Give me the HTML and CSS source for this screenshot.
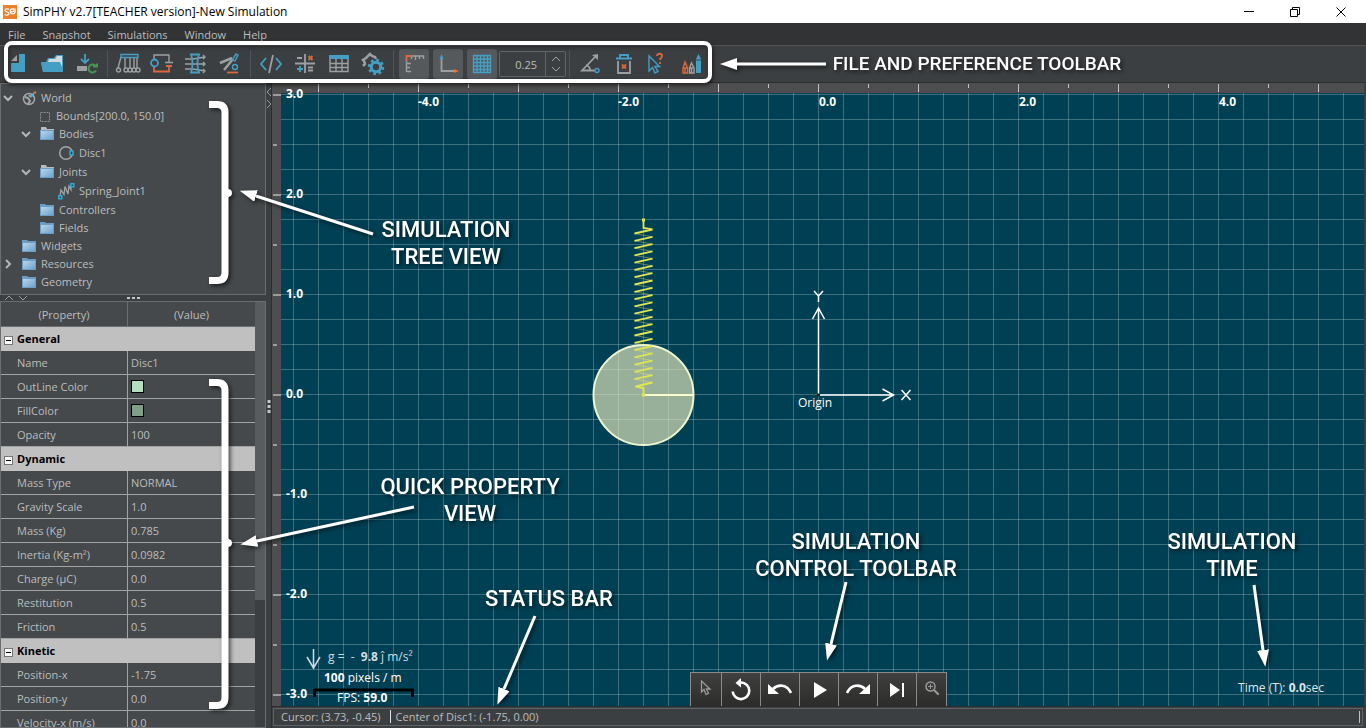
FILE: index.html
```html
<!DOCTYPE html>
<html lang="en">
<head>
<meta charset="utf-8">
<title>SimPHY v2.7[TEACHER version]-New Simulation</title>
<link rel="stylesheet" href="styles.css">
</head>
<body>
<div class="app">
  <header class="titlebar">
    <svg class="logo" viewBox="0 0 14 14" aria-hidden="true"><rect width="14" height="14" fill="#ee7f2b"/><path d="M6 4.500C5 3.500 2 3.500 2 5.300C2 7 6 6.500 6 8.600C6 10.500 2.500 10.500 1.700 9.300" fill="none" stroke="#fff" stroke-width="1.300"/><circle cx="9.700" cy="6.300" r="2.500" fill="none" stroke="#fff" stroke-width="1.200"/><path d="M8 8.500L12.500 3.500M8 6.500h3.500" stroke="#fff" stroke-width=".9"/></svg>
    <h1 class="title">SimPHY v2.7[TEACHER version]-New Simulation</h1>
    <div class="window-buttons">
      <button type="button" aria-label="Minimize"><svg width="12" height="12" viewBox="0 0 12 12"><path d="M1 5.500h10"/></svg></button>
      <button type="button" aria-label="Restore"><svg width="12" height="12" viewBox="0 0 12 12"><path d="M1.500 3.500h7v7h-7zM3.500 3.500v-2h7v7h-2"/></svg></button>
      <button type="button" aria-label="Close"><svg width="12" height="12" viewBox="0 0 12 12"><path d="M1.500 1.500l9 9M10.500 1.500l-9 9"/></svg></button>
    </div>
  </header>

  <nav class="menubar">
    <button type="button">File</button>
    <button type="button">Snapshot</button>
    <button type="button">Simulations</button>
    <button type="button">Window</button>
    <button type="button">Help</button>
  </nav>

  <div class="toolbar">
    <button class="tool" type="button" aria-label="New"><svg viewBox="0 0 24 24"><path d="M12 2h6v18H4v-9h8z" class="fb"/><path d="M10 3v6H4z" class="fg"/></svg></button>
    <button class="tool" type="button" aria-label="Open"><svg viewBox="0 0 24 24"><path d="M0 10h5l2-4h6l2-3h7v17H2z" class="fb"/><path d="M7 10l1-3h6l2-3h5v11l-2-5z" fill="#d3dadd"/><path d="M0 10h18l3 10H2z" class="fb"/></svg></button>
    <button class="tool" type="button" aria-label="Save"><svg viewBox="0 0 24 24"><path d="M10 2v9M6 7l4 4 4-4" class="sb w2"/><path d="M2 14h10v5H2z" class="fg"/><path d="M21 14.500a4 4 0 1 0 0 4M18 14.500h4v-3" fill="none" stroke="#469653" stroke-width="2"/></svg></button>
    <span class="sep"></span>
    <button class="tool" type="button" aria-label="Newton's cradle"><svg viewBox="0 0 24 24"><path d="M5 5L2 16M9 6v10M14 6v10M18 6v10M21 6v10" class="sg"/><circle cx="2.500" cy="18" r="2" class="sg"/><circle cx="10" cy="18" r="2" class="sg"/><circle cx="14" cy="18" r="2" class="sg"/><circle cx="18" cy="18" r="2" class="sg"/><circle cx="22" cy="18" r="2" class="sg"/><path d="M5 2.500h17v3H5z" class="sb" stroke-width="2"/></svg></button>
    <button class="tool" type="button" aria-label="Circuit"><svg viewBox="0 0 24 24"><path d="M4 8V3h15v7M15 10.500h8" class="sg"/><path d="M16 14h6M19 14v5.500H4V14" class="so w2"/><circle cx="4.500" cy="11" r="3.500" class="sb w2"/></svg></button>
    <button class="tool" type="button" aria-label="Lens"><svg viewBox="0 0 24 24"><path d="M1 7h8l12-2M1 12h20M1 17h8l12 2M19 3l2 2-2 2M19 10l2 2-2 2M19 17l2 2-2 2" class="sg"/><path d="M7 2.500h8c-2 5-2 13 0 18H7c2-5 2-13 0-18z" class="sb w2"/></svg></button>
    <button class="tool" type="button" aria-label="Incline"><svg viewBox="0 0 24 24"><path d="M2 11l12-5M6 18l9-11" class="sg thick"/><path d="M14 8l4-6 2 1-3 6z" class="sb"/><circle cx="17" cy="15" r="2.500" class="sb"/><path d="M9 20.500h11" class="so w2"/></svg></button>
    <span class="sep"></span>
    <button class="tool" type="button" aria-label="Script"><svg viewBox="0 0 24 24"><path d="M7 6l-5 6 5 6M17 6l5 6-5 6" class="sb w2"/><path d="M14 3l-4 18" class="sg w2"/></svg></button>
    <button class="tool" type="button" aria-label="Calculator"><svg viewBox="0 0 24 24"><path d="M2 11.500h20M12 2v19M4 6h5M15 15.500h5M15 18.500h5" class="sg w2"/><path d="M15.500 4l4 4M19.500 4l-4 4" class="so w2"/><path d="M4 17h6M7 14v6" class="sb w2"/></svg></button>
    <button class="tool" type="button" aria-label="Table"><svg viewBox="0 0 24 24"><path d="M3 7v12.500h18V7M3 11.500h18M3 15.500h18M9 7v12M15 7v12" class="sg"/><path d="M2 3h20v4H2z" class="fb"/></svg></button>
    <button class="tool" type="button" aria-label="Settings"><svg viewBox="0 0 24 24"><path d="M2 14l2-2-1-3-1-1 3-2 2-2 2-2 2 2 3 1 1 2" class="sg thick"/><circle cx="15" cy="15" r="4.700" fill="none" stroke="#459fc5" stroke-width="3"/><circle cx="15" cy="15" r="7" fill="none" stroke="#459fc5" stroke-width="2.500" stroke-dasharray="2.750 2.750"/></svg></button>
    <span class="sep"></span>
    <button class="tool toggle" type="button" aria-pressed="true" aria-label="Rulers"><svg viewBox="0 0 24 24"><path d="M4.500 20V7M5 11.500h4M5 15.500h3M5 19.500h4M7 4h15M9.500 4v3M13.500 4v4M17.500 4v3M21.500 4v3" class="sg"/><path d="M4.500 9V4H10" class="so w2"/></svg></button>
    <button class="tool toggle" type="button" aria-pressed="true" aria-label="Axes"><svg viewBox="0 0 24 24"><path d="M5.500 5v14H20" class="sg w2"/><path d="M5.500 2l2 5h-4z" class="fb"/><path d="M23 19l-5 2v-4z" class="fo"/></svg></button>
    <button class="tool toggle" type="button" aria-pressed="true" aria-label="Grid"><svg viewBox="0 0 24 24"><path d="M3.500 3.500h17v17h-17zM7 3v17M10.500 3v17M14 3v17M17.500 3v17M3 7h17M3 10.500h17M3 14h17M3 17.500h17" class="sb"/></svg></button>
    <div class="spinner">
      <input type="text" value="0.25" aria-label="Grid size">
      <div class="steps">
        <button type="button" aria-label="Increase"><svg width="10" height="6" viewBox="0 0 10 6"><path d="M1 5l4-4 4 4"/></svg></button>
        <button type="button" aria-label="Decrease"><svg width="10" height="6" viewBox="0 0 10 6"><path d="M1 1l4 4 4-4"/></svg></button>
      </div>
    </div>
    <span class="sep"></span>
    <button class="tool" type="button" aria-label="Angle"><svg viewBox="0 0 24 24"><path d="M17 5L4 18.500h13M8 13c3 1 4 3 4 5" class="sg w2"/><path d="M20 2v6l-6-5z" class="fg"/><circle cx="19" cy="18.500" r="2" class="sb"/></svg></button>
    <button class="tool" type="button" aria-label="Delete"><svg viewBox="0 0 24 24"><path d="M6 9v12h12V9" class="sg w2"/><path d="M4 6.500h16M8 6V3h8v3" class="sb w2"/><path d="M10 12.500l4 4M14 12.500l-4 4" class="so w2"/></svg></button>
    <button class="tool" type="button" aria-label="Context help"><svg viewBox="0 0 24 24"><path d="M3 4v15l3.500-3.500L9 21l3-1.500-3-5h4.500z" class="sb"/><path d="M11 4c0-3 5-3 5 0 0 2-2 2-2 4M14 10v2" class="so w2"/></svg></button>
    <button class="tool" type="button" aria-label="Styles"><svg viewBox="0 0 24 24"><path d="M3 21v-5l2-6 2.500 6v5zM3 16h4M5 16v5" class="so"/><path d="M9.500 21v-5l2-5 2.500 5v5zM10 16h3M11.500 16v5" class="sg"/><path d="M16 21V7l2.500-5L21 7v14z" class="fb"/><path d="M16 8h5" stroke="#3c3f41"/></svg></button>
  </div>

  <main class="workspace">
    <aside class="side">
      <ul class="tree">
        <li class="node d0"><button type="button" class="twist" aria-label="Collapse World"><svg width="10" height="8" viewBox="0 0 10 8"><path d="M1 2l4 4 4-4"/></svg></button><svg class="ico" viewBox="0 0 16 16"><circle cx="8" cy="9" r="5.500" fill="none" stroke="#a4a7a9" stroke-width="1.500"/><path d="M4 7l3 1 2 3-2 3M8 5l2 2" stroke="#a4a7a9" fill="none" stroke-width="2"/><path d="M10 7l3-4" stroke="#4fb3dc" stroke-width="2"/><path d="M13 3l2-1" stroke="#e8703a" stroke-width="2"/></svg>World</li>
        <li class="node d1"><span class="twist"></span><svg class="ico narrow" viewBox="0 0 13 16"><rect x="1.500" y="4.500" width="9" height="9" fill="none" stroke="#8d9092" stroke-dasharray="2 1"/></svg>Bounds[200.0, 150.0]</li>
        <li class="node d1"><button type="button" class="twist" aria-label="Collapse Bodies"><svg width="10" height="8" viewBox="0 0 10 8"><path d="M1 2l4 4 4-4"/></svg></button><svg class="ico" viewBox="0 0 16 16"><use href="#folder-open"/></svg>Bodies</li>
        <li class="node d2 tall"><svg class="ico big" viewBox="0 0 18 18"><circle cx="9" cy="9" r="6.300" fill="none" stroke="#a4a7a9" stroke-width="1.500"/><rect x="13" y="7" width="3" height="4" fill="#3c3f41" stroke="#2fa9d9" stroke-width="1.500"/></svg>Disc1</li>
        <li class="node d1"><button type="button" class="twist" aria-label="Collapse Joints"><svg width="10" height="8" viewBox="0 0 10 8"><path d="M1 2l4 4 4-4"/></svg></button><svg class="ico" viewBox="0 0 16 16"><use href="#folder-open"/></svg>Joints</li>
        <li class="node d2 tall"><svg class="ico big" viewBox="0 0 18 18"><path d="M3 14l1-6 3 4.500 1-8 3 7.500 1-8 2 3.500v-4" fill="none" stroke="#a4a7a9" stroke-width="1.300"/><path d="M1.800 13.800h3v3h-3zM13.800 1.800h3v3h-3z" fill="#3c3f41" stroke="#2fa9d9" stroke-width="1.500"/></svg>Spring_Joint1</li>
        <li class="node d1"><span class="twist"></span><svg class="ico" viewBox="0 0 16 16"><use href="#folder"/></svg>Controllers</li>
        <li class="node d1"><span class="twist"></span><svg class="ico" viewBox="0 0 16 16"><use href="#folder"/></svg>Fields</li>
        <li class="node d0"><span class="twist"></span><svg class="ico" viewBox="0 0 16 16"><use href="#folder"/></svg>Widgets</li>
        <li class="node d0"><button type="button" class="twist" aria-label="Expand Resources"><svg width="8" height="10" viewBox="0 0 8 10"><path d="M2 1l4 4-4 4"/></svg></button><svg class="ico" viewBox="0 0 16 16"><use href="#folder"/></svg>Resources</li>
        <li class="node d0"><span class="twist"></span><svg class="ico" viewBox="0 0 16 16"><use href="#folder"/></svg>Geometry</li>
      </ul>
      <div class="hsplit">
        <svg width="26" height="6" viewBox="0 0 26 6"><path d="M1 5l4-4 4 4M15 1l4 4 4-4" fill="none" stroke="#9a9c9e"/></svg>
        <svg width="14" height="4" viewBox="0 0 14 4"><path d="M1 2h3M6 2h3M11 2h3" stroke="#c6c6c6" stroke-width="2"/></svg>
      </div>
      <div class="props">
        <div class="sheet-box">
        <table class="sheet">
          <thead><tr><th>(Property)</th><th>(Value)</th></tr></thead>
          <tbody>
            <tr class="group"><th colspan="2"><button type="button" aria-label="Collapse General"></button>General</th></tr>
            <tr><td>Name</td><td>Disc1</td></tr>
            <tr><td>OutLine Color</td><td><span class="swatch outline"></span></td></tr>
            <tr><td>FillColor</td><td><span class="swatch fill"></span></td></tr>
            <tr><td>Opacity</td><td>100</td></tr>
            <tr class="group"><th colspan="2"><button type="button" aria-label="Collapse Dynamic"></button>Dynamic</th></tr>
            <tr><td>Mass Type</td><td>NORMAL</td></tr>
            <tr><td>Gravity Scale</td><td>1.0</td></tr>
            <tr><td>Mass (Kg)</td><td>0.785</td></tr>
            <tr><td>Inertia (Kg-m²)</td><td>0.0982</td></tr>
            <tr><td>Charge (µC)</td><td>0.0</td></tr>
            <tr><td>Restitution</td><td>0.5</td></tr>
            <tr><td>Friction</td><td>0.5</td></tr>
            <tr class="group"><th colspan="2"><button type="button" aria-label="Collapse Kinetic"></button>Kinetic</th></tr>
            <tr><td>Position-x</td><td>-1.75</td></tr>
            <tr><td>Position-y</td><td>0.0</td></tr>
            <tr><td>Velocity-x (m/s)</td><td>0.0</td></tr>
          </tbody>
        </table>
        </div>
        <div class="scroll"><div class="thumb"></div></div>
      </div>
    </aside>
    <div class="vsplit">
      <svg width="6" height="22" viewBox="0 0 6 22"><path d="M5 1L1 5l4 4M1 13l4 4-4 4" fill="none" stroke="#9a9c9e"/></svg>
      <svg width="4" height="14" viewBox="0 0 4 14"><path d="M2 1v3M2 6v3M2 11v3" stroke="#c6c6c6" stroke-width="3"/></svg>
    </div>

    <section class="view">
      <div class="stage">
        <svg class="scene" width="100%" height="100%">
          <defs>
            <pattern id="grid" width="25" height="25" patternUnits="userSpaceOnUse" x="21" y="11"><path d="M0 .5h25M.5 0v25" stroke="#fff" stroke-opacity=".24"/></pattern>
            <pattern id="ticks-x" width="100" height="11" patternUnits="userSpaceOnUse" x="46" y="0"><path d="M.5 1v8" stroke="#c4c4c4"/><path d="M50.500 1v4" stroke="#c4c4c4"/></pattern>
            <pattern id="ticks-y" width="10" height="100" patternUnits="userSpaceOnUse" x="0" y="11"><path d="M1 1h8" stroke="#9c9c9c" stroke-width="2"/><path d="M1 51h4" stroke="#9c9c9c" stroke-width="2"/></pattern>
          </defs>
          <rect width="100%" height="100%" fill="#004054"/>
          <rect width="100%" height="100%" fill="url(#grid)"/>
          <rect width="100%" height="10" fill="#4e4e50"/>
          <rect width="100%" height="10" fill="url(#ticks-x)"/>
          <rect width="9" height="100%" fill="#4e4e50"/>
          <rect y="10" width="9" height="100%" fill="url(#ticks-y)"/>
          <g class="scale">
            <text x="146" y="23">-4.0</text><text x="346" y="23">-2.0</text><text x="547" y="23">0.0</text><text x="747" y="23">2.0</text><text x="947" y="23">4.0</text>
            <text x="14" y="15">3.0</text><text x="14" y="115">2.0</text><text x="14" y="215">1.0</text><text x="14" y="315">0.0</text><text x="14" y="415">-1.0</text><text x="14" y="515">-2.0</text><text x="14" y="615">-3.0</text>
          </g>
          <!-- disc and spring, origin at the disc centre -->
          <g transform="translate(371.5 312)" fill="none">
            <circle r="50" fill="#e6eabf" fill-opacity=".66" stroke="#eef6d0" stroke-width="2"/>
            <path d="M0 0H50" stroke="#fbfbcf" stroke-width="2"/>
            <path d="M-9-161.500L9-158.200M-9-154.200L9-150.900M-9-146.900L9-143.600M-9-139.600L9-136.400M-9-132.400L9-129.100M-9-125.100L9-121.800M-9-117.800L9-114.500M-9-110.500L9-107.200M-9-103.200L9-99.900M-9-95.900L9-92.600M-9-88.600L9-85.400M-9-81.400L9-78.100M-9-74.100L9-70.800M-9-66.800L9-63.500M-9-59.500L9-56.200M-9-52.200L9-48.900M-9-44.900L9-41.600M-9-37.600L9-34.400M-9-30.400L9-27.100M-9-23.100L9-19.800M-9-15.800L9-12.500" stroke="#e8f060" stroke-opacity=".4"/>
            <path d="M0-175v8L9-165.500L-9-161.500M9-158.200L-9-154.200M9-150.900L-9-146.900M9-143.600L-9-139.600M9-136.400L-9-132.400M9-129.100L-9-125.100M9-121.800L-9-117.800M9-114.500L-9-110.500M9-107.200L-9-103.200M9-99.900L-9-95.900M9-92.600L-9-88.600M9-85.400L-9-81.400M9-78.100L-9-74.100M9-70.800L-9-66.800M9-63.500L-9-59.500M9-56.200L-9-52.200M9-48.900L-9-44.900M9-41.600L-9-37.600M9-34.400L-9-30.400M9-27.100L-9-23.100M9-19.800L-9-15.800M9-12.500L-8-8.500L0-7V0" stroke="#dfe653" stroke-width="1.800"/>
            <path d="M-1.500-176.500h3v3h-3zM-1.500-1.500h3v3h-3z" fill="#dfe653"/>
          </g>
          <!-- world axes -->
          <g transform="translate(546.500 312)" fill="none" stroke="#fff" stroke-width="1.500">
            <path d="M0 0V-87M-6-76l6-11 6 11M0 0H75M64-6l11 6-11 6"/>
            <path d="M-4.500-104l4.500 5 4.500-5M0-99v6M83-5l9 10M92-5l-9 10"/>
            <path d="M-1.500-1.500h3v3h-3z" fill="#222" stroke="none"/>
          </g>
          <text class="note" x="526" y="324">Origin</text>
          <g class="note">
            <path d="M41.500 566v20M35 574l6.500 11 6.500-11" fill="none" stroke="#cfdde0" stroke-width="1.500"/>
            <text x="56" y="578" class="dim">g&#160;=&#160; -&#160; <tspan class="strong">9.8</tspan> ĵ m/s²</text>
            <text x="52" y="599"><tspan class="strong">100</tspan> pixels / m</text>
            <path d="M42.500 614v-7h98v7" fill="none" stroke="#000" stroke-width="3"/>
            <text x="65" y="619">FPS: <tspan class="strong">59.0</tspan></text>
          </g>
        </svg>
        <div class="controls">
          <button type="button" class="small" aria-label="Select"><svg width="12" height="16" viewBox="0 0 12 16"><path d="M1.500 1v11l2.500-2.500 2 5 2.500-1-2-4.500H10z" fill="none" stroke="#9b9b9b" stroke-width="1.300"/></svg></button>
          <button type="button" aria-label="Reset"><svg width="24" height="24" viewBox="0 0 24 24"><path d="M12 4.500a8.300 8.300 0 1 1-8.300 9" fill="none" stroke="#fff" stroke-width="2.600"/><path d="M12 0v9.500L6.500 5z" fill="#fff"/></svg></button>
          <button type="button" aria-label="Step back"><svg width="24" height="16" viewBox="0 0 24 16"><path d="M5 7c5-5 14-5 18 4" fill="none" stroke="#fff" stroke-width="2.600"/><path d="M0 2v10h11z" fill="#fff"/></svg></button>
          <button type="button" aria-label="Play"><svg width="16" height="16" viewBox="0 0 16 16"><path d="M3 0v16l13-8z" fill="#fff"/></svg></button>
          <button type="button" aria-label="Step forward"><svg width="24" height="16" viewBox="0 0 24 16"><path d="M19 7C14 2 5 2 1 11" fill="none" stroke="#fff" stroke-width="2.600"/><path d="M24 2v10H13z" fill="#fff"/></svg></button>
          <button type="button" aria-label="Skip to end"><svg width="16" height="16" viewBox="0 0 16 16"><path d="M1 1v14l10-7zM13 1h2v14h-2z" fill="#fff"/></svg></button>
          <button type="button" class="small" aria-label="Zoom"><svg width="14" height="14" viewBox="0 0 14 14"><path d="M9 9l5 5" stroke="#9b9b9b" stroke-width="2"/><circle cx="5.500" cy="5.500" r="4.500" fill="none" stroke="#9b9b9b" stroke-width="1.500"/><path d="M3 5.500h5M5.500 3v5" stroke="#9b9b9b"/></svg></button>
        </div>
        <p class="time">Time (T): <b>0.0</b>sec</p>
      </div>
      <footer class="status">
        <div class="status-inner"><span>Cursor: (3.73, -0.45)</span><span class="second">Center of Disc1: (-1.75, 0.00)</span></div>
      </footer>
    </section>
  </main>

  <div class="toolbar-frame"></div>
  <svg class="callouts" width="100%" height="100%">
    <defs>
      <marker id="head" markerUnits="userSpaceOnUse" markerWidth="18" markerHeight="14" refX="0" refY="6" orient="auto"><path d="M0 0L17 6L0 12z" fill="#fff"/></marker>
    </defs>
    <g fill="none" stroke="#fff" stroke-width="3">
      <path d="M826 64H737" marker-end="url(#head)"/>
      <path d="M373 234L256 196" marker-end="url(#head)"/>
      <path d="M414 507L257 541" marker-end="url(#head)"/>
      <path d="M535 616L504 689" marker-end="url(#head)"/>
      <path d="M846 582L831 644" marker-end="url(#head)"/>
      <path d="M1254 585L1263 650" marker-end="url(#head)"/>
    </g>
    <g fill="none" stroke="#fff" stroke-width="7">
      <path d="M209 104.500h8q8 0 8 8v160q0 8-8 8h-8"/>
      <path d="M209 382.500h8q8 0 8 8v307q0 8-8 8h-8"/>
    </g>
    <path d="M226 188l5 2q2 3 0 6l-5 2zM226 538l5 2q2 3 0 6l-5 2z" fill="#fff"/>
    <g class="caption">
      <text class="wide" x="977" y="70">FILE AND PREFERENCE TOOLBAR</text>
      <text x="446" y="237">SIMULATION</text><text x="446" y="264">TREE VIEW</text>
      <text x="470" y="494">QUICK PROPERTY</text><text x="470" y="521">VIEW</text>
      <text x="549" y="606">STATUS BAR</text>
      <text x="856" y="549">SIMULATION</text><text x="856" y="576">CONTROL TOOLBAR</text>
      <text x="1232" y="549">SIMULATION</text><text x="1232" y="576">TIME</text>
    </g>
  </svg>
</div>

<svg width="0" height="0" class="sprites" aria-hidden="true">
  <defs>
    <linearGradient id="blue" x1="0" y1="0" x2="1" y2="1"><stop offset="0" stop-color="#b7d6ec"/><stop offset="1" stop-color="#6ea3cd"/></linearGradient>
    <g id="folder"><path d="M1 2h5l1 1h8v11H1z" fill="#6c9dc4"/><path d="M2 5h12v8H2z" fill="url(#blue)"/></g>
    <g id="folder-open"><path d="M2 1h5l1 2h7v2H2z" fill="#b9bbbd"/><path d="M1 4h14v10H1z" fill="#6c9dc4"/><path d="M2 5h12v8H2z" fill="url(#blue)"/></g>
  </defs>
</svg>
</body>
</html>
```
FILE: styles.css
```css
* { box-sizing: border-box; }
body { margin: 0; background: #3c3f41; font-family: "Open Sans", "Noto Sans", sans-serif; font-size: 11px; color: #bbbdbf; overflow: hidden; }
button { margin: 0; padding: 0; border: 0; background: none; color: inherit; font: inherit; }
.app { position: relative; display: flex; flex-direction: column; height: 100vh; }

.titlebar { display: flex; align-items: center; height: 23px; padding-left: 3px; background: #fff; color: #000; flex: none; }
.logo { width: 14px; height: 14px; }
.title { margin: 0 0 0 6px; font-size: 12px; font-weight: 400; flex: 1; }
.window-buttons { display: flex; padding-right: 2px; }
.window-buttons button { display: grid; place-items: center; width: 46px; height: 21px; }
.window-buttons path { fill: none; stroke: #000; }

.menubar { display: flex; gap: 17px; height: 22px; padding-left: 8px; flex: none; background: #323335; }

.toolbar { display: flex; align-items: center; height: 38px; padding-left: 2px; flex: none; background: #3c3f41; border-top: 1px solid #505254; border-bottom: 1px solid #2c2e2f; }
.tool { display: grid; place-items: center; width: 34px; height: 30px; flex: none; }
.tool svg { width: 24px; height: 24px; overflow: visible; }
.toggle { width: 30px; margin: 0 2px; background: #56595c; border-radius: 3px; }
.sep { width: 1px; height: 28px; margin: 0 3px; background: #515456; flex: none; }
.fb { fill: #459fc5; }
.fg { fill: #9da0a2; }
.fo { fill: #e87440; }
.sb, .sg, .so { fill: none; stroke-width: 1.4; }
.sb { stroke: #459fc5; }
.sg { stroke: #9da0a2; }
.so { stroke: #d9693a; }
.w2 { stroke-width: 1.8; }
.thick { stroke-width: 2.5; }
.spinner { display: flex; width: 67px; height: 26px; border: 1px solid #626466; border-radius: 2px; }
.spinner input { flex: 1; min-width: 0; border: 0; padding: 0 8px 0 0; background: none; color: inherit; font: inherit; text-align: right; }
.steps { display: flex; flex-direction: column; justify-content: center; gap: 3px; width: 20px; border-left: 1px solid #626466; }
.steps button { display: grid; place-items: center; height: 7px; }
.steps path { fill: none; stroke: #a0a2a4; }

.workspace { display: flex; flex: 1; min-height: 0; }
.side { display: flex; flex-direction: column; width: 266px; flex: none; }
.tree { margin: 0; padding: 5px 0 3px; list-style: none; background: #45494b; border: 1px solid #6b6e70; }
.node { display: flex; align-items: center; height: 18px; line-height: 18px; }
.node.tall { height: 20px; }
.d1 { padding-left: 18px; }
.d2 { padding-left: 56px; }
.twist { display: grid; place-items: center; width: 14px; height: 16px; margin-right: 6px; }
.twist path { fill: none; stroke: #b4b6b8; stroke-width: 2; }
.ico { width: 16px; height: 16px; margin-right: 4px; }
.ico.narrow { width: 13px; }
.ico.big { width: 18px; height: 18px; }
.hsplit { display: flex; align-items: center; height: 6px; padding-left: 4px; gap: 96px; flex: none; }
.props { display: flex; flex: 1; min-height: 0; overflow: hidden; border: 1px solid #6b6e70; background: #3c3f41; }
.sheet-box { flex: 1; min-width: 0; }
.sheet { width: 100%; border-collapse: separate; border-spacing: 0; table-layout: fixed; background: #45494b; }
.sheet th, .sheet td { height: 24px; padding: 0 0 0 3px; font-weight: 400; text-align: left; line-height: 23px; white-space: nowrap; border-bottom: 1px solid #a2a4a4; }
.sheet td:first-child { padding-left: 16px; border-right: 1px solid #a2a4a4; }
.sheet thead th { height: 25px; padding: 0; text-align: center; border-bottom-color: #6b6e70; }
.sheet thead th:first-child { border-right: 1px solid #6b6e70; }
.sheet .group th { padding-left: 3px; background: #c0c0c0; color: #000; font-weight: 700; border-color: #c0c0c0; }
.group button { display: inline-grid; place-items: center; width: 9px; height: 9px; margin-right: 4px; vertical-align: middle; background: #fff; border: 1px solid #777; }
.group button::after { content: ""; width: 5px; height: 1px; background: #000; }
.swatch { display: block; width: 13px; height: 13px; border: 1px solid #000; }
.outline { background: #b3dfc0; }
.fill { background: #809f88; }
.scroll { width: 10px; background: #3c3f41; }
.thumb { height: 70%; background: #585c5f; }
.vsplit { display: flex; flex-direction: column; align-items: center; width: 6px; padding-top: 4px; gap: 290px; flex: none; border-right: 1px solid #2c2e2f; }
.vsplit svg { flex: none; }

.view { display: flex; flex-direction: column; flex: 1; min-width: 0; padding-right: 2px; }
.stage { position: relative; flex: 1; min-height: 0; }
.scene { position: absolute; inset: 0; }
.scale { fill: #fff; font-weight: 700; font-size: 12px; }
.note { fill: #fff; font-size: 12px; }
.dim { fill: #cfdde0; }
.strong { font-weight: 700; }
.controls { position: absolute; left: 50%; bottom: 0; display: flex; width: 257px; height: 34px; margin-left: -128px; background: linear-gradient(#404040, #2c2c2a); border: 1px solid #8a8a88; border-bottom: 0; }
.controls button { display: grid; place-items: center; flex: 1 1 39px; border-left: 1px solid #8a8a88; }
.controls button:first-child { border-left: 0; }
.controls .small { flex: 0 0 30px; padding-bottom: 4px; }
.time { position: absolute; right: 40px; bottom: 10px; margin: 0; font-size: 12px; line-height: 16px; color: #dde6e8; }
.status { height: 22px; padding: 1px 1px; flex: none; border-top: 1px solid #2c2e2f; }
.status-inner { display: flex; align-items: center; height: 18px; padding: 0 2px 1px 7px; border: 1px solid #606365; }
.status-inner::after { content: ""; width: 1px; height: 12px; margin-left: auto; background: #c0c0c0; }
.second { margin-left: 9px; padding-left: 5px; border-left: 1px solid #e0e0e0; line-height: 13px; }

.toolbar-frame { position: absolute; left: 4px; top: 41px; width: 708px; height: 42px; border: 4px solid #fff; border-radius: 8px; box-shadow: 1px 2px 4px rgba(0, 0, 0, .6), inset 1px 2px 4px rgba(0, 0, 0, .4); pointer-events: none; }
.callouts { position: absolute; inset: 0; pointer-events: none; filter: drop-shadow(2px 2px 2px rgba(0, 0, 0, .6)); }
.caption { fill: #fff; font-family: Roboto, "Liberation Sans", sans-serif; font-size: 22px; font-weight: 500; text-anchor: middle; }
.caption .wide { font-size: 19px; }
.sprites { position: absolute; }
```
